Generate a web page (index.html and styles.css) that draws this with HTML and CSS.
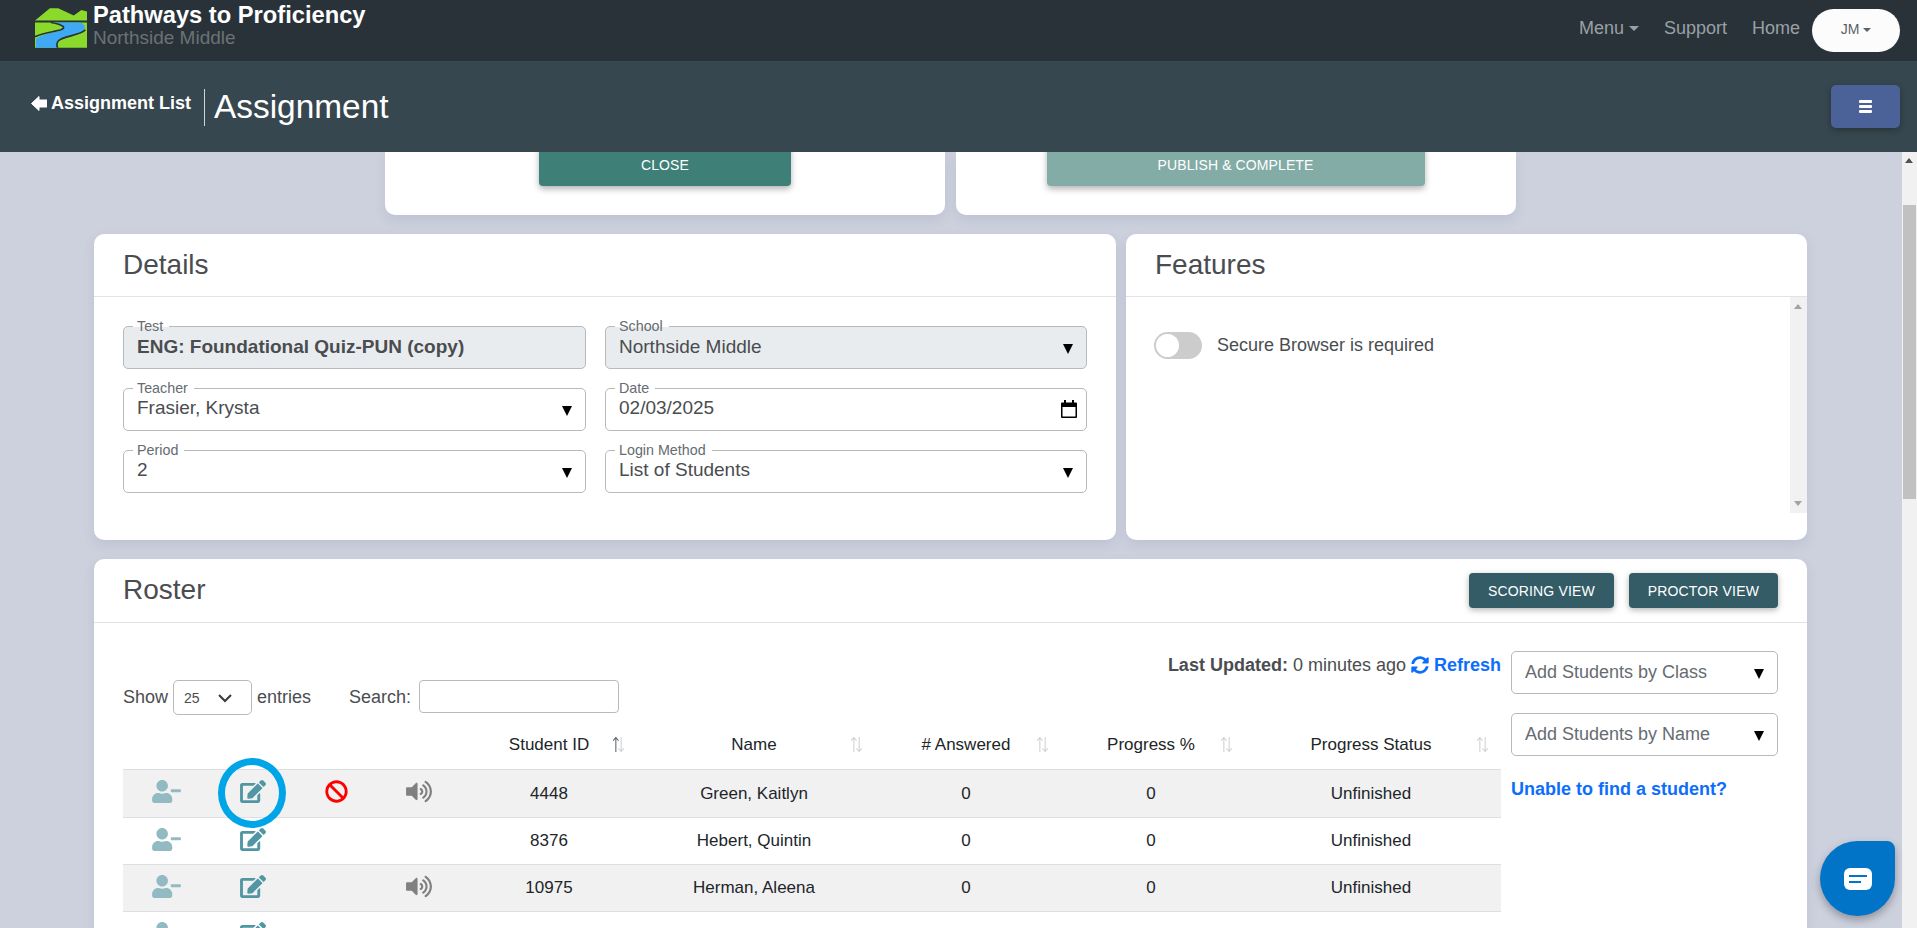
FILE: index.html
```html
<!DOCTYPE html>
<html lang="en">
<head>
<meta charset="utf-8">
<title>Assignment</title>
<link rel="stylesheet" href="styles.css">
</head>
<body>
<svg class="defs" aria-hidden="true">
  <symbol id="i-user" viewBox="0 0 640 512"><path d="M624 208H432c-8.8 0-16 7.2-16 16v32c0 8.8 7.2 16 16 16h192c8.8 0 16-7.2 16-16v-32c0-8.8-7.2-16-16-16zm-400 48c70.7 0 128-57.3 128-128S294.7 0 224 0 96 57.3 96 128s57.3 128 128 128zm89.6 32h-16.7c-22.2 10.2-46.9 16-72.9 16s-50.6-5.8-72.9-16h-16.7C60.2 288 0 348.2 0 422.4V464c0 26.5 21.5 48 48 48h352c26.5 0 48-21.5 48-48v-41.6c0-74.2-60.2-134.4-134.4-134.4z"/></symbol>
  <symbol id="i-edit" viewBox="0 0 576 512"><path d="M402.6 83.2l90.2 90.2c3.8 3.8 3.8 10 0 13.8L274.4 405.6l-92.8 10.3c-12.4 1.4-22.9-9.1-21.5-21.5l10.3-92.8L388.8 83.2c3.8-3.8 10-3.8 13.8 0zm162-22.9l-48.8-48.8c-15.2-15.2-39.9-15.2-55.2 0l-35.4 35.4c-3.8 3.8-3.8 10 0 13.8l90.2 90.2c3.8 3.8 10 3.8 13.8 0l35.4-35.4c15.2-15.3 15.2-40 0-55.2zM384 346.2V448H64V128h229.8c3.2 0 6.2-1.3 8.5-3.5l40-40c7.6-7.6 2.2-20.5-8.5-20.5H48C21.5 64 0 85.5 0 112v352c0 26.5 21.5 48 48 48h352c26.5 0 48-21.5 48-48V306.2c0-10.7-12.9-16-20.5-8.5l-40 40c-2.2 2.3-3.5 5.3-3.5 8.5z"/></symbol>
  <symbol id="i-ban" viewBox="0 0 512 512"><path d="M256 8C119.034 8 8 119.033 8 256s111.034 248 248 248 248-111.034 248-248S392.967 8 256 8zm130.108 117.892c65.448 65.448 70 165.481 20.677 235.637L150.47 105.216c70.204-49.356 170.226-44.735 235.638 20.676zM125.892 386.108c-65.448-65.448-70-165.481-20.677-235.637L361.53 406.784c-70.203 49.356-170.226 44.736-235.638-20.676z"/></symbol>
  <symbol id="i-vol" viewBox="0 0 576 512"><path d="M215.03 71.05L126.06 160H24c-13.26 0-24 10.74-24 24v144c0 13.25 10.74 24 24 24h102.06l88.97 88.95c15.03 15.03 40.97 4.47 40.97-16.97V88.02c0-21.46-25.96-32-40.97-16.97zm233.32-51.08c-11.17-7.33-26.18-4.24-33.51 6.95-7.34 11.17-4.22 26.18 6.95 33.51 66.27 43.49 105.82 116.6 105.82 195.58 0 78.98-39.55 152.09-105.82 195.58-11.17 7.32-14.29 22.34-6.95 33.5 7.04 10.71 21.93 14.56 33.51 6.95C528.27 439.58 576 351.33 576 256S528.27 72.43 448.35 19.97zM480 256c0-63.53-32.06-121.94-85.77-156.24-11.19-7.14-26.03-3.82-33.12 7.46s-3.78 26.21 7.41 33.36C408.27 165.97 432 209.11 432 256s-23.73 90.03-63.48 115.42c-11.19 7.14-14.5 22.07-7.41 33.36 6.51 10.36 21.12 15.14 33.12 7.46C447.94 377.94 480 319.54 480 256zm-141.77-76.87c-11.58-6.33-26.19-2.16-32.61 9.45-6.39 11.61-2.16 26.2 9.45 32.61C327.98 228.28 336 241.63 336 256c0 14.38-8.02 27.72-20.92 34.81-11.61 6.41-15.84 21-9.45 32.61 6.43 11.66 21.05 15.8 32.61 9.45 28.23-15.55 45.77-45 45.77-76.88s-17.54-61.32-45.78-76.86z"/></symbol>
  <symbol id="i-sort" viewBox="0 0 12 16"><path class="sort-up" d="M3.5 15V1.600M1 4.400l2.500-3 2.500 3" fill="none"/><path class="sort-down" d="M8.500 1v13.400M6 11.600l2.500 3 2.500-3" fill="none"/></symbol>
</svg>

<header class="topbar">
  <div class="brand">
    <svg class="logo" viewBox="0 0 157 119" aria-hidden="true">
      <path class="logo-green" d="M0 37 45 0h25l47 22 23-17 17 5v27z"/>
      <path class="logo-green" d="M0 43h157v76H0z"/>
      <path class="logo-blue" d="M45 43h92c12 6 18 14 10 24-14 14-58 14-72 27-10 8-10 16-7 25H3V92c16-12 50-18 74-25 16-6 10-16-32-24z"/>
      <path class="logo-line" d="M0 86c22-11 58-15 78-21 15-5 12-15-30-22M152 65c-16 18-68 18-81 33-6 6-6 13-3 21"/>
    </svg>
    <div class="brand-text">
      <div class="brand-title">Pathways to Proficiency</div>
      <div class="brand-sub">Northside Middle</div>
    </div>
  </div>
  <nav class="topnav">
    <a class="navlink caret">Menu</a>
    <a class="navlink">Support</a>
    <a class="navlink">Home</a>
    <button class="user caret" type="button">JM</button>
  </nav>
</header>

<div class="subbar">
  <a class="back">
    <svg class="back-icon" viewBox="0 0 16 15" aria-hidden="true"><path d="M.5 7.500 8 .5v3.500h8v7H8v3.500z"/></svg>
    <span>Assignment List</span>
  </a>
  <h1 class="page-title">Assignment</h1>
  <button class="burger" type="button" aria-label="Menu"><span></span><span></span><span></span></button>
</div>

<div class="viewport">
  <main class="content">
    <div class="action-row">
      <section class="card action-card"><button class="btn-close" type="button">CLOSE</button></section>
      <section class="card action-card"><button class="btn-publish" type="button">PUBLISH &amp; COMPLETE</button></section>
    </div>

    <div class="info-row">
      <section class="card details">
        <h2 class="card-head">Details</h2>
        <div class="field-grid">
          <div class="field disabled"><span class="field-label">Test</span><strong class="field-value">ENG: Foundational Quiz-PUN (copy)</strong></div>
          <div class="field disabled"><span class="field-label">School</span><span class="field-value">Northside Middle</span><i class="tri"></i></div>
          <div class="field"><span class="field-label">Teacher</span><span class="field-value">Frasier, Krysta</span><i class="tri"></i></div>
          <div class="field"><span class="field-label">Date</span><span class="field-value">02/03/2025</span>
            <svg class="calendar" viewBox="0 0 16 18" aria-hidden="true"><path d="M3 0h2v3H3zM11 0h2v3h-2z"/><path d="M1 2.500h14a1 1 0 0 1 1 1V17a1 1 0 0 1-1 1H1a1 1 0 0 1-1-1V3.500a1 1 0 0 1 1-1zm.5 4.500v9.500h13V7z" fill-rule="evenodd"/></svg>
          </div>
          <div class="field"><span class="field-label">Period</span><span class="field-value">2</span><i class="tri"></i></div>
          <div class="field"><span class="field-label">Login Method</span><span class="field-value">List of Students</span><i class="tri"></i></div>
        </div>
      </section>

      <section class="card features">
        <h2 class="card-head">Features</h2>
        <div class="features-body">
          <div class="toggle-row">
            <span class="toggle"><span class="knob"></span></span>
            <span>Secure Browser is required</span>
          </div>
          <div class="mini-scroll"></div>
        </div>
      </section>
    </div>

    <section class="card roster">
      <div class="roster-head">
        <h2 class="roster-title">Roster</h2>
        <div class="roster-actions">
          <button class="btn-view" type="button">SCORING VIEW</button>
          <button class="btn-view" type="button">PROCTOR VIEW</button>
        </div>
      </div>
      <div class="roster-body">
        <div class="roster-main">
          <div class="updated">
            <strong>Last Updated:</strong> 0 minutes ago
            <a class="refresh">
              <svg class="refresh-icon" viewBox="0 0 512 512" aria-hidden="true"><path d="M370.72 133.28C339.458 104.008 298.888 87.962 255.848 88c-77.458.068-144.328 53.178-162.791 126.85-1.344 5.363-6.122 9.15-11.651 9.15H24.103c-7.498 0-13.194-6.807-11.807-14.176C33.933 94.924 134.813 8 256 8c66.448 0 126.791 26.136 171.315 68.685L463.03 40.97C478.149 25.851 504 36.559 504 57.941V192c0 13.255-10.745 24-24 24H345.941c-21.382 0-32.09-25.851-16.971-40.971l41.75-41.749zM32 296h134.059c21.382 0 32.09 25.851 16.971 40.971l-41.75 41.75c31.262 29.273 71.835 45.319 114.876 45.28 77.418-.07 144.315-53.144 162.787-126.849 1.344-5.363 6.122-9.15 11.651-9.15h57.304c7.498 0 13.194 6.807 11.807 14.176C478.067 417.076 377.187 504 256 504c-66.448 0-126.791-26.136-171.315-68.685L48.97 471.03C33.851 486.149 8 475.441 8 454.059V320c0-13.255 10.745-24 24-24z"/></svg>
              Refresh
            </a>
          </div>
          <div class="table-tools">
            <span>Show</span>
            <div class="length-select"><span>25</span>
              <svg class="chevron" viewBox="0 0 16 16" aria-hidden="true"><path d="M2 5l6 6 6-6" fill="none"/></svg>
            </div>
            <span>entries</span>
            <label class="search-label" for="q">Search:</label>
            <input class="search" id="q" type="text">
          </div>
          <table class="roster-table">
            <colgroup>
              <col class="c-a"><col class="c-b"><col class="c-c"><col class="c-d">
              <col class="c-id"><col class="c-name"><col class="c-ans"><col class="c-pct"><col class="c-status">
            </colgroup>
            <thead>
              <tr>
                <th></th><th></th><th></th><th></th>
                <th>Student ID<svg class="sort active"><use href="#i-sort"/></svg></th>
                <th>Name<svg class="sort s-near"><use href="#i-sort"/></svg></th>
                <th># Answered<svg class="sort"><use href="#i-sort"/></svg></th>
                <th>Progress %<svg class="sort s-near"><use href="#i-sort"/></svg></th>
                <th>Progress Status<svg class="sort"><use href="#i-sort"/></svg></th>
              </tr>
            </thead>
            <tbody>
              <tr>
                <td><svg class="ic ic-user"><use href="#i-user"/></svg></td>
                <td class="ring-cell"><svg class="ic ic-edit"><use href="#i-edit"/></svg><span class="ring"></span></td>
                <td><svg class="ic ic-ban"><use href="#i-ban"/></svg></td>
                <td><svg class="ic ic-vol"><use href="#i-vol"/></svg></td>
                <td>4448</td><td>Green, Kaitlyn</td><td>0</td><td>0</td><td>Unfinished</td>
              </tr>
              <tr>
                <td><svg class="ic ic-user"><use href="#i-user"/></svg></td>
                <td><svg class="ic ic-edit"><use href="#i-edit"/></svg></td>
                <td></td><td></td>
                <td>8376</td><td>Hebert, Quintin</td><td>0</td><td>0</td><td>Unfinished</td>
              </tr>
              <tr>
                <td><svg class="ic ic-user"><use href="#i-user"/></svg></td>
                <td><svg class="ic ic-edit"><use href="#i-edit"/></svg></td>
                <td></td>
                <td><svg class="ic ic-vol"><use href="#i-vol"/></svg></td>
                <td>10975</td><td>Herman, Aleena</td><td>0</td><td>0</td><td>Unfinished</td>
              </tr>
              <tr>
                <td><svg class="ic ic-user"><use href="#i-user"/></svg></td>
                <td><svg class="ic ic-edit"><use href="#i-edit"/></svg></td>
                <td></td><td></td><td></td><td></td><td></td><td></td><td></td>
              </tr>
            </tbody>
          </table>
        </div>
        <aside class="roster-side">
          <div class="add-select"><span>Add Students by Class</span><i class="tri"></i></div>
          <div class="add-select"><span>Add Students by Name</span><i class="tri"></i></div>
          <a class="unable">Unable to find a student?</a>
        </aside>
      </div>
    </section>
  </main>
  <div class="page-scroll"><span class="thumb"></span></div>
</div>

<button class="chat" type="button" aria-label="Chat">
  <svg class="chat-icon" viewBox="0 0 28 22" aria-hidden="true"><rect width="28" height="22" rx="6" fill="#fff"/><path d="M5 8h18M5 14h12" fill="none" stroke="#0274c7" stroke-width="2"/></svg>
</button>
</body>
</html>
```
FILE: styles.css
```css
* { box-sizing: border-box; }
html, body { height: 100%; }
body {
  margin: 0;
  height: 100vh;
  overflow: hidden;
  display: flex;
  flex-direction: column;
  background: #cdd1de;
  color: #4a4d50;
  font-family: "Liberation Sans", Arial, sans-serif;
  font-size: 18px;
}
button { font-family: inherit; border: 0; cursor: pointer; }
.defs { position: absolute; width: 0; height: 0; }

/* top bar */
.topbar {
  flex: 0 0 61px;
  display: flex;
  align-items: center;
  justify-content: space-between;
  padding: 0 17px 0 35px;
  background: #293239;
}
.brand { display: flex; align-items: flex-start; height: 61px; }
.logo { width: 52px; height: 40px; margin-top: 8px; }
.logo-green { fill: #8ad92b; }
.logo-blue { fill: #3fa9f5; }
.logo-line { fill: none; stroke: #293239; stroke-width: 5; }
.brand-text { margin-left: 6px; }
.brand-title { font-size: 23.7px; font-weight: 700; line-height: 27px; margin-top: 2px; color: #fff; }
.brand-sub { font-size: 19px; line-height: 20px; margin-top: -1px; color: #6b7275; }
.topnav { display: flex; align-items: center; gap: 25px; }
.navlink { color: #9aa1a5; font-size: 18px; margin-bottom: 4px; }
.caret::after {
  content: "";
  display: inline-block;
  margin-left: 5px;
  vertical-align: 3px;
  border-top: 5px solid currentColor;
  border-left: 5px solid transparent;
  border-right: 5px solid transparent;
}
.user {
  width: 88px;
  height: 43px;
  margin-left: -13px;
  padding-bottom: 4px;
  border-radius: 22px;
  background: #fcfcfc;
  color: #5a6268;
  font-size: 14px;
}
.user::after { margin-left: 4px; vertical-align: 2px; border-top-width: 4px; border-left-width: 4px; border-right-width: 4px; }

/* sub bar */
.subbar {
  flex: 0 0 91px;
  display: flex;
  align-items: center;
  padding: 0 17px 0 31px;
  background: #37474f;
  color: #fff;
}
.back { display: flex; align-items: center; gap: 4px; font-weight: 700; font-size: 18px; margin-bottom: 7px; }
.back-icon { width: 16px; height: 15px; fill: #fff; stroke: #fff; stroke-width: 1; stroke-linejoin: round; }
.page-title {
  margin: 2px 0 0 13px;
  padding: 0 0 1px 9px;
  font-size: 33.4px;
  font-weight: 400;
  line-height: 36px;
  border-left: 1px solid #cfd4d6;
}
.burger {
  margin-left: auto;
  width: 69px;
  height: 43px;
  display: flex;
  flex-direction: column;
  align-items: center;
  justify-content: center;
  gap: 2px;
  border-radius: 5px;
  background: #4a6298;
  box-shadow: 0 2px 6px rgba(0, 0, 0, .3);
}
.burger span { width: 13px; height: 3px; border-radius: 1px; background: #fff; }

/* scrolling region */
.viewport { flex: 1; min-height: 0; display: flex; overflow: hidden; }
.content { flex: 1; min-width: 0; padding: 0 95px 0 94px; overflow: hidden; }
.page-scroll { flex: 0 0 15px; position: relative; background: #f1f1f1; }
.page-scroll::before {
  content: "";
  position: absolute;
  top: 6px;
  left: 3px;
  border-bottom: 5px solid #505050;
  border-left: 4.500px solid transparent;
  border-right: 4.500px solid transparent;
}
.thumb { position: absolute; top: 53px; left: 1px; width: 13px; height: 294px; background: #c1c1c1; }

.card { background: #fff; border-radius: 10px; box-shadow: 0 5px 12px rgba(80, 90, 120, .12); }

.action-row { display: flex; justify-content: center; gap: 11px; margin-bottom: 19px; }
.action-card {
  width: 560px;
  height: 63px;
  display: flex;
  justify-content: center;
  align-items: flex-end;
  padding-bottom: 29px;
  border-radius: 0 0 10px 10px;
}
.btn-close, .btn-publish {
  height: 40px;
  color: #fff;
  font-size: 14px;
  letter-spacing: .1px;
  border-radius: 0 0 4px 4px;
  box-shadow: 0 3px 6px rgba(0, 0, 0, .3);
  padding: 0 0 2px;
}
.btn-close { width: 252px; background: #3e8078; }
.btn-publish { width: 378px; background: #84aca6; margin-left: -1px; }

.info-row { display: flex; gap: 10px; margin-bottom: 19px; }
.details { flex: 0 0 1022px; height: 306px; }
.features { flex: 1; height: 306px; }
.card-head {
  margin: 0;
  height: 63px;
  padding-left: 29px;
  font-size: 28px;
  font-weight: 400;
  line-height: 61px;
  border-bottom: 1px solid #e1e3e6;
}
.field-grid {
  display: grid;
  grid-template-columns: 463px 482px;
  grid-auto-rows: 43px;
  gap: 19px;
  padding: 29px 0 0 29px;
}
.field, .add-select {
  position: relative;
  display: flex;
  align-items: center;
  padding: 0 13px 0 13px;
  border: 1px solid #b9b9b9;
  border-radius: 5px;
  font-size: 18px;
}
.field { font-size: 19px; }
.field-value { margin-top: -3px; }
.field.disabled { background: #e9ecef; }
.field.disabled .field-value { margin-top: -2px; }
.field-label {
  position: absolute;
  top: -8px;
  left: 9px;
  padding: 0 6px 0 4px;
  font-size: 14.3px;
  line-height: 14px;
  color: #666c72;
  background: linear-gradient(#fff 8px, transparent 8px);
}
.tri {
  margin-left: auto;
  margin-top: 3px;
  border-top: 10px solid #000;
  border-left: 5px solid transparent;
  border-right: 5px solid transparent;
}
.calendar { margin-left: auto; width: 16px; height: 18px; margin-right: -4px; margin-top: -2px; fill: #000; }

.features-body { display: flex; height: 216px; }
.toggle-row { flex: 1; display: flex; align-items: flex-start; gap: 15px; padding: 35px 0 0 28px; line-height: 27px; }
.toggle { width: 48px; height: 27px; padding: 2px; border-radius: 14px; background: #ccc; display: block; }
.knob { display: block; width: 23px; height: 23px; border-radius: 50%; background: #fff; }
.mini-scroll { flex: 0 0 17px; position: relative; background: #f1f1f1; }
.mini-scroll::before, .mini-scroll::after {
  content: "";
  position: absolute;
  left: 4px;
  border-left: 4px solid transparent;
  border-right: 4px solid transparent;
}
.mini-scroll::before { top: 7px; border-bottom: 5px solid #a3a3a3; }
.mini-scroll::after { bottom: 7px; border-top: 5px solid #a3a3a3; }

/* roster */
.roster { padding-bottom: 40px; }
.roster-head {
  height: 64px;
  display: flex;
  align-items: flex-start;
  justify-content: space-between;
  padding: 14px 29px 0;
  border-bottom: 1px solid #e1e3e6;
}
.roster-title { margin: 0; font-size: 28px; font-weight: 400; line-height: 34px; }
.roster-actions { display: flex; gap: 15px; }
.btn-view {
  height: 35px;
  padding: 0 19px;
  background: #335c67;
  color: #fff;
  font-size: 14px;
  letter-spacing: .15px;
  border-radius: 4px;
  box-shadow: 0 2px 6px rgba(0, 0, 0, .3);
}
.roster-body { display: flex; gap: 10px; padding: 0 29px; }
.roster-main { flex: 0 0 1378px; }
.updated { height: 24px; margin-top: 30px; text-align: right; font-size: 18px; line-height: 24px; white-space: nowrap; }
.refresh { color: #0d6efd; font-weight: 700; }
.refresh-icon { width: 18px; height: 18px; fill: #0d6efd; vertical-align: -3px; }
.table-tools { display: flex; align-items: center; height: 35px; margin-top: 3px; }
.length-select {
  width: 79px;
  height: 35px;
  margin: 0 5px;
  padding: 0 10px;
  display: flex;
  align-items: center;
  justify-content: space-between;
  border: 1px solid #b9b9b9;
  border-radius: 5px;
  font-size: 14px;
}
.chevron { width: 16px; height: 16px; margin-right: 8px; stroke: #343a40; stroke-width: 2; }
.search-label { margin-left: 38px; }
.search {
  width: 200px;
  height: 33px;
  margin: -2px 0 0 8px;
  border: 1px solid #b9b9b9;
  border-radius: 4px;
  background: #fff;
}
.roster-table {
  width: 1378px;
  table-layout: fixed;
  border-collapse: separate;
  border-spacing: 0;
  font-size: 17px;
  color: #212529;
  text-align: center;
}
.c-a { width: 87px; } .c-b { width: 85px; } .c-c { width: 82px; } .c-d { width: 84px; }
.c-id { width: 176px; } .c-name { width: 234px; } .c-ans { width: 190px; } .c-pct { width: 180px; } .c-status { width: 260px; }
.roster-table th {
  position: relative;
  height: 55px;
  padding: 0 0 14px;
  vertical-align: bottom;
  font-weight: 400;
  border-bottom: 1px solid #dcdfe2;
}
.roster-table td { height: 47px; padding: 0; border-bottom: 1px solid #dcdfe2; }
.roster-table tbody tr:first-child td { height: 48px; }
.roster-table tbody tr:nth-child(odd) td { background: #f1f1f1; }
.roster-table tbody tr:nth-child(4) td { background: #fff; }
.sort { position: absolute; right: 12px; bottom: 16px; width: 13px; height: 17px; stroke-width: 1; --sort-up: #cfd1d3; }
.s-near { right: 8px; }
.sort.active { --sort-up: #5f666c; }
.sort-up { stroke: var(--sort-up); }
.sort-down { stroke: #cfd1d3; }
.ic { display: block; margin: -4px auto 0; height: 23px; }
.ic-user { width: 29px; fill: #92bac3; }
.ic-edit { width: 26px; fill: #5096a3; }
.ic-ban { width: 23px; fill: #f00; }
.ic-vol { width: 26px; fill: #808080; }
.ring-cell { position: relative; }
.ring {
  position: absolute;
  left: 8px;
  top: -12px;
  width: 68px;
  height: 70px;
  border: 7px solid #00a5e8;
  border-radius: 50%;
  z-index: 1;
}

.roster-side { flex: 1; padding-top: 28px; display: flex; flex-direction: column; }
.add-select { height: 43px; color: #666c72; margin-bottom: 19px; }
.unable { color: #0d6efd; font-weight: 700; font-size: 18px; line-height: 24px; margin-top: 2px; }

/* chat */
.chat {
  position: fixed;
  left: 1820px;
  top: 841px;
  width: 75px;
  height: 75px;
  display: flex;
  align-items: center;
  justify-content: center;
  padding: 0;
  background: #0274c7;
  border-radius: 50% 8px 50% 50%;
  box-shadow: 0 4px 8px rgba(0, 0, 0, .3);
}
.chat-icon { width: 28px; height: 22px; }
```
